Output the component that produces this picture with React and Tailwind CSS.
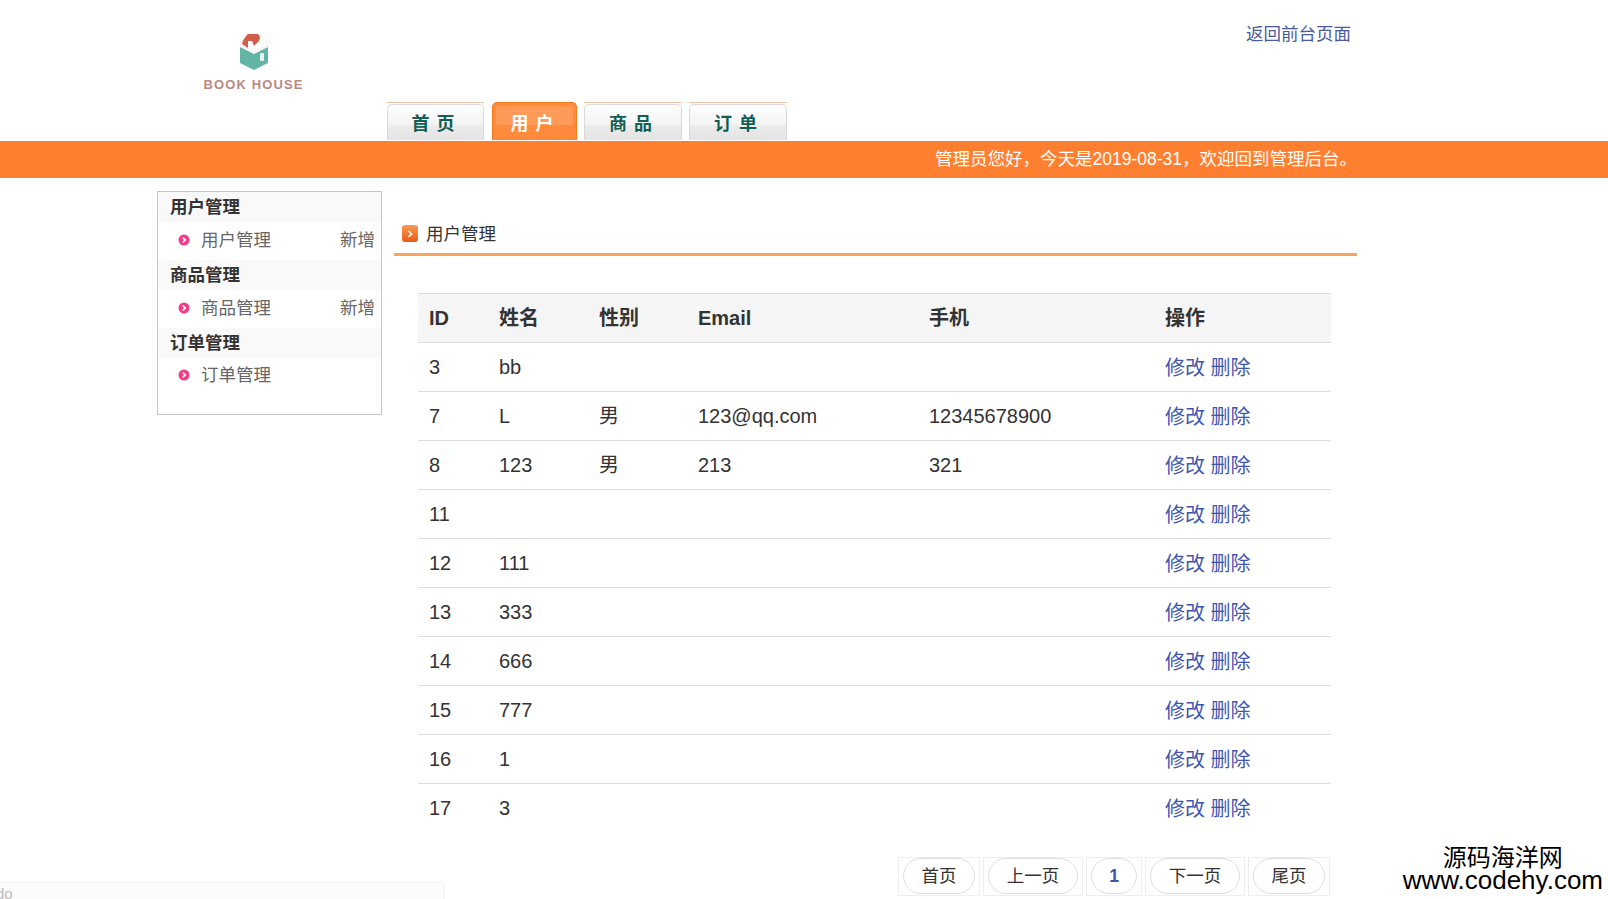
import React from 'react';

const tabs = [
  { label: '首 页', w: 'w-[97px] mr-[1px]' },
  { label: '用 户', w: 'w-[85px]', active: true },
  { label: '商 品', w: 'w-[98px]' },
  { label: '订 单', w: 'w-[98px]' },
];

const menu = [
  { title: '用户管理', item: '用户管理', add: true },
  { title: '商品管理', item: '商品管理', add: true },
  { title: '订单管理', item: '订单管理' },
];

const users = [
  ['3', 'bb', '', '', ''],
  ['7', 'L', '男', '123@qq.com', '12345678900'],
  ['8', '123', '男', '213', '321'],
  ['11', '', '', '', ''],
  ['12', '111', '', '', ''],
  ['13', '333', '', '', ''],
  ['14', '666', '', '', ''],
  ['15', '777', '', '', ''],
  ['16', '1', '', '', ''],
  ['17', '3', '', '', ''],
];

const pages = [
  { label: '首页', box: 'w-[82px]' },
  { label: '上一页', box: 'w-[100px]' },
  { label: '1', box: 'w-[56px]', current: true },
  { label: '下一页', box: 'w-[100px]' },
  { label: '尾页', box: 'w-[82px]' },
];

function Logo() {
  return (
    <div className="flex w-[101px] flex-col items-center">
      <svg width="32" height="38" viewBox="0 0 32 38" className="blur-[0.4px]">
        <path d="M2 14 L16 21 L30 14 L30 30 L16 37 L2 30 Z" fill="#62b5a4" />
        <path d="M2 12 C3 6 7 3 9 1 L19 1 C24 3 28 7 30 12 L16 19 Z" fill="#fff" stroke="#e3dcd6" strokeWidth="0.6" />
        <path d="M4 11 C5 6 8 3 10 1 L20 1 C23 4 22 7 20 9 L16 13 L14 8 L10 8 L10 15 Z" fill="#cf5f4a" />
        <rect x="22" y="20" width="4" height="8" rx="1" fill="#e6f3f0" />
      </svg>
      <span className="mt-[6px] whitespace-nowrap text-[13px] font-bold leading-[16px] tracking-[1.1px] text-[#b98a80]">BOOK HOUSE</span>
    </div>
  );
}

function Bullet() {
  return (
    <svg width="12" height="12" viewBox="0 0 12 12" className="shrink-0">
      <circle cx="6" cy="6" r="5.5" fill="#f23c85" />
      <path d="M4.8 3.5 L7.2 6 L4.8 8.5" fill="none" stroke="#fff" strokeWidth="1.7" />
    </svg>
  );
}

export default function App() {
  return (
    <div className="relative h-screen overflow-hidden bg-white font-['Liberation_Sans','Noto_Sans_CJK_SC',sans-serif] text-[#333]">
      {/* header */}
      <header className="flex h-[141px]">
        <div className="ml-[203px] mt-[33px]">
          <Logo />
        </div>
        <nav className="ml-[83px] mt-[102px] flex h-[38px] gap-[7px]">
          {tabs.map((t) =>
            t.active ? (
              <div
                key={t.label}
                className={`${t.w} rounded-t-[5px] border border-b-0 border-[#f47c1c] bg-[#ff8a3c] px-[3px] pt-[3px]`}
              >
                <div className="flex h-[32px] items-center justify-center bg-[linear-gradient(#ff9a58_0%,#ff9a58_60%,#ff8a3c_60%,#ff8a3c_100%)] pr-[4px] pt-[4px] text-[18px] font-bold tracking-[1px] text-white">
                  {t.label}
                </div>
              </div>
            ) : (
              <div key={t.label} className={`${t.w} border-t border-[#f3c4a4] pt-[1px]`}>
                <div className="flex h-[36px] items-center justify-center rounded-t-[5px] border border-b-0 border-[#dadada] bg-[linear-gradient(#fdfdfd_0%,#f4f4f4_55%,#ebebeb_60%,#e4e4e4_100%)] pr-[4px] pt-[4px] text-[18px] font-bold tracking-[1px] text-[#0f5f55]">
                  {t.label}
                </div>
              </div>
            )
          )}
        </nav>
        <a className="ml-auto mr-[257px] mt-[22px] h-fit text-[17.5px] leading-[24px] text-[#4a5a9c]">返回前台页面</a>
      </header>

      <div className="flex h-[37px] items-center justify-end bg-[#ff7f30] pr-[251px] text-[17.5px] text-white">
        管理员您好，今天是2019-08-31，欢迎回到管理后台。
      </div>

      <div className="flex">
        {/* left menu */}
        <aside className="ml-[157px] mt-[13px] h-[224px] w-[225px] border border-[#c4c4c4]">
          {menu.map((m) => (
            <div key={m.title}>
              <div className="flex h-[30px] items-center bg-[#f9f9f9] pl-[12px] text-[17.5px] font-bold">{m.title}</div>
              <div className={`flex items-center pb-[2px] pl-[20px] pr-[6px] text-[17.5px] text-[#666] ${m.add ? 'h-[38px]' : 'h-[36px]'}`}>
                <Bullet />
                <span className="ml-[11px]">{m.item}</span>
                {m.add && <span className="ml-auto">新增</span>}
              </div>
            </div>
          ))}
        </aside>

        {/* content */}
        <main className="ml-[12px] w-[963px]">
          <div className="mt-[43px] flex h-[35px] items-start border-b-[3px] border-[#f9a35b] pl-[8px] text-[17.5px] leading-[26px]">
            <span className="mt-[4px] flex h-[17px] w-[16px] items-center justify-center rounded-[3px] bg-gradient-to-b from-[#f79a55] to-[#e8590c]">
              <svg width="8" height="8" viewBox="0 0 8 8">
                <path d="M2.5 1 L5.5 4 L2.5 7" fill="none" stroke="#fff" strokeWidth="1.6" />
              </svg>
            </span>
            <span className="ml-[8px]">用户管理</span>
          </div>

          <table className="ml-[24px] mt-[37px] w-[913px] table-fixed border-collapse text-[20px]">
            <colgroup>
              <col className="w-[70px]" />
              <col className="w-[100px]" />
              <col className="w-[99px]" />
              <col className="w-[231px]" />
              <col className="w-[236px]" />
              <col className="w-[177px]" />
            </colgroup>
            <thead>
              <tr className="h-[49px] border-y border-[#ddd] bg-[#f5f5f5] text-left font-bold">
                {['ID', '姓名', '性别', 'Email', '手机', '操作'].map((h) => (
                  <th key={h} className="pl-[11px]">{h}</th>
                ))}
              </tr>
            </thead>
            <tbody>
              {users.map((u, i) => (
                <tr key={u[0]} className={`h-[49px] ${i ? 'border-t border-[#ddd]' : ''}`}>
                  {u.map((v, j) => (
                    <td key={j} className="pl-[11px]">{v}</td>
                  ))}
                  <td className="pl-[11px] pt-[2px] text-[#3f56b0]">修改 删除</td>
                </tr>
              ))}
            </tbody>
          </table>

          {/* pagination */}
          <div className="ml-[504px] mt-[24px] flex gap-[3px]">
            {pages.map((p) => (
              <div key={p.label} className={`${p.box} flex h-[39px] items-center justify-center border border-[#eee] px-[4px]`}>
                <span
                  className={`flex h-[36px] w-full items-center justify-center rounded-[18px] border border-[#ddd] text-[17.5px] ${
                    p.current ? 'font-bold text-[#3f56b0]' : ''
                  }`}
                >
                  {p.label}
                </span>
              </div>
            ))}
          </div>
        </main>
      </div>

      {/* browser status bubble, cut off by the window */}
      <div className="absolute bottom-0 left-0 h-[17px] w-[445px] overflow-hidden rounded-tr-[6px] border-r border-t border-[#f2f2f2] bg-[#fcfcfc] text-[15px] leading-[22px] text-[#bbb]">
        <span className="ml-[-4px]">do</span>
      </div>

      {/* watermark */}
      <div className="absolute bottom-[7px] right-[5px] flex flex-col items-center text-black">
        <span className="text-[24px] leading-[22px]">源码海洋网</span>
        <span className="text-[26px] leading-[23px]">www.codehy.com</span>
      </div>
    </div>
  );
}
